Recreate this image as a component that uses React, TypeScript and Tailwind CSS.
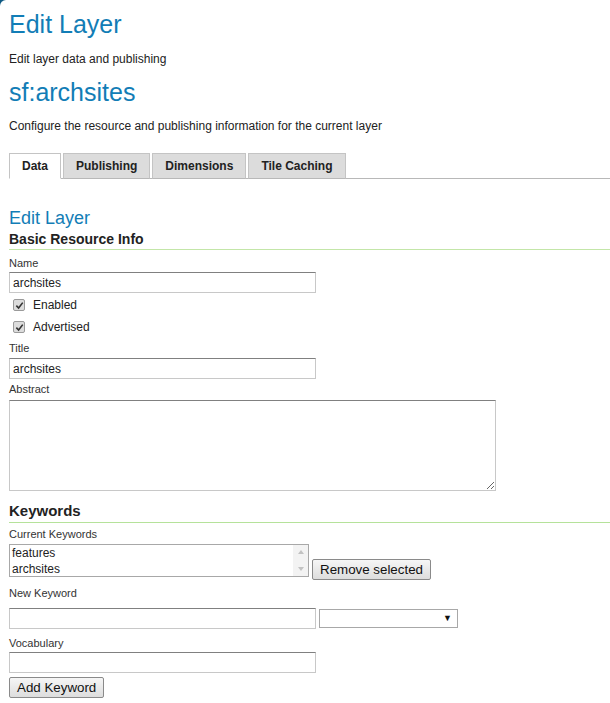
import { useState } from 'react';

const font = { fontFamily: '"Liberation Sans", Arial, sans-serif' };

const inputCls =
  'block h-[21px] border border-[#c8c8c8] border-t-[#808080] bg-white px-[3px] text-[12px] text-[#222] outline-none';

const Label = ({ text, className = '' }: { text: string; className?: string }) => (
  <div className={`text-[11px] leading-[14px] text-[#333] ${className}`}>{text}</div>
);

const Check = ({ label, className = '' }: { label: string; className?: string }) => (
  <label className={`flex h-[16px] items-center ${className}`}>
    <span className="ml-[4px] flex h-[12px] w-[12px] items-center justify-center rounded-[2px] border border-[#9a9a9a] bg-[#dcdcdc]">
      <svg viewBox="0 0 10 10" className="h-[9px] w-[9px]">
        <path d="M1.5 5.2 L4 7.8 L8.6 1.8" fill="none" stroke="#333" strokeWidth="1.8" />
      </svg>
    </span>
    <span className="ml-[8px] text-[12px] leading-[16px] text-[#222]">{label}</span>
  </label>
);

const Btn = ({ text, className = '' }: { text: string; className?: string }) => (
  <button
    className={`h-[21px] whitespace-nowrap rounded-[2px] border border-[#8a8a8a] bg-gradient-to-b from-[#f6f6f6] to-[#dddddd] px-[7px] text-[13.33px] leading-[19px] text-[#111] ${className}`}
  >
    {text}
  </button>
);

export default function App() {
  const [tab, setTab] = useState('Data');
  const tabs = ['Data', 'Publishing', 'Dimensions', 'Tile Caching'];

  return (
    <div className="min-h-screen bg-[#0f5a83]" style={font}>
      <div className="min-h-screen rounded-tl-[6px] bg-white pl-[9px] pt-[9px] pb-6">
        <h1 className="text-[25px] leading-[30px] text-[#127db6]">Edit Layer</h1>
        <p className="mt-[12px] text-[12px] leading-[16px] text-[#222]">Edit layer data and publishing</p>
        <h1 className="mt-[10px] text-[25px] leading-[30px] text-[#127db6]">sf:archsites</h1>
        <p className="mt-[11px] text-[12px] leading-[16px] text-[#222]">
          Configure the resource and publishing information for the current layer
        </p>

        {/* tabs */}
        <div className="mt-[19px] flex gap-[2px] border-b border-[#b8b8b8]">
          {tabs.map((t) => (
            <button
              key={t}
              onClick={() => setTab(t)}
              className={`-mb-px h-[26px] border border-[#c4c4c4] px-[12px] text-[12px] font-bold leading-[24px] text-[#222] ${
                tab === t ? 'border-b-white bg-white' : 'border-b-[#b8b8b8] bg-[#dcdcdc]'
              }`}
            >
              {t}
            </button>
          ))}
        </div>

        <h2 className="mt-[28px] text-[18px] leading-[22px] text-[#127db6]">Edit Layer</h2>
        <h3 className="mt-[1px] border-b border-[#c3e6a8] pb-[1px] text-[14px] font-bold leading-[18px] text-[#222]">
          Basic Resource Info
        </h3>

        <Label text="Name" className="mt-[6px]" />
        <input className={`${inputCls} mt-[2px] w-[307px]`} defaultValue="archsites" />
        <Check label="Enabled" className="mt-[4px]" />
        <Check label="Advertised" className="mt-[6px]" />
        <Label text="Title" className="mt-[6px]" />
        <input className={`${inputCls} mt-[3px] w-[307px]`} defaultValue="archsites" />
        <Label text="Abstract" className="mt-[3px]" />
        <textarea className="mt-[4px] block h-[91px] w-[487px] border border-[#c8c8c8] border-t-[#808080] bg-white text-[12px] outline-none" />

        <h3 className="mt-[11px] border-b border-[#b5e29a] pb-[2px] text-[15px] font-bold leading-[18px] text-[#222]">
          Keywords
        </h3>
        <Label text="Current Keywords" className="mt-[4px]" />
        <div className="mt-[3px] flex items-start">
          <div className="flex h-[33px] w-[300px] border border-[#a8a8a8] bg-white">
            <div className="flex-1 pl-[2px] text-[12px] leading-[16px] text-[#222]">
              <div>features</div>
              <div>archsites</div>
            </div>
            <div className="flex w-[15px] flex-col items-center justify-between bg-[#f3f3f3] py-[5px]">
              <div className="h-0 w-0 border-x-[3.5px] border-b-[4px] border-x-transparent border-b-[#c2c2c2]" />
              <div className="h-0 w-0 border-x-[3.5px] border-t-[4px] border-x-transparent border-t-[#c2c2c2]" />
            </div>
          </div>
          <Btn text="Remove selected" className="ml-[3px] mt-[15px]" />
        </div>

        <Label text="New Keyword" className="mt-[6px]" />
        <div className="mt-[8px] flex items-center">
          <input className={`${inputCls} w-[307px]`} />
          <div className="ml-[3px] flex h-[19px] w-[139px] items-center justify-end border border-[#a8a8a8] bg-white pr-[5px]">
            <span className="text-[9px] leading-none text-[#111]">▼</span>
          </div>
        </div>

        <Label text="Vocabulary" className="mt-[7px]" />
        <input className={`${inputCls} mt-[2px] w-[307px]`} />
        <Btn text="Add Keyword" className="mt-[4px] block" />
      </div>
    </div>
  );
}
